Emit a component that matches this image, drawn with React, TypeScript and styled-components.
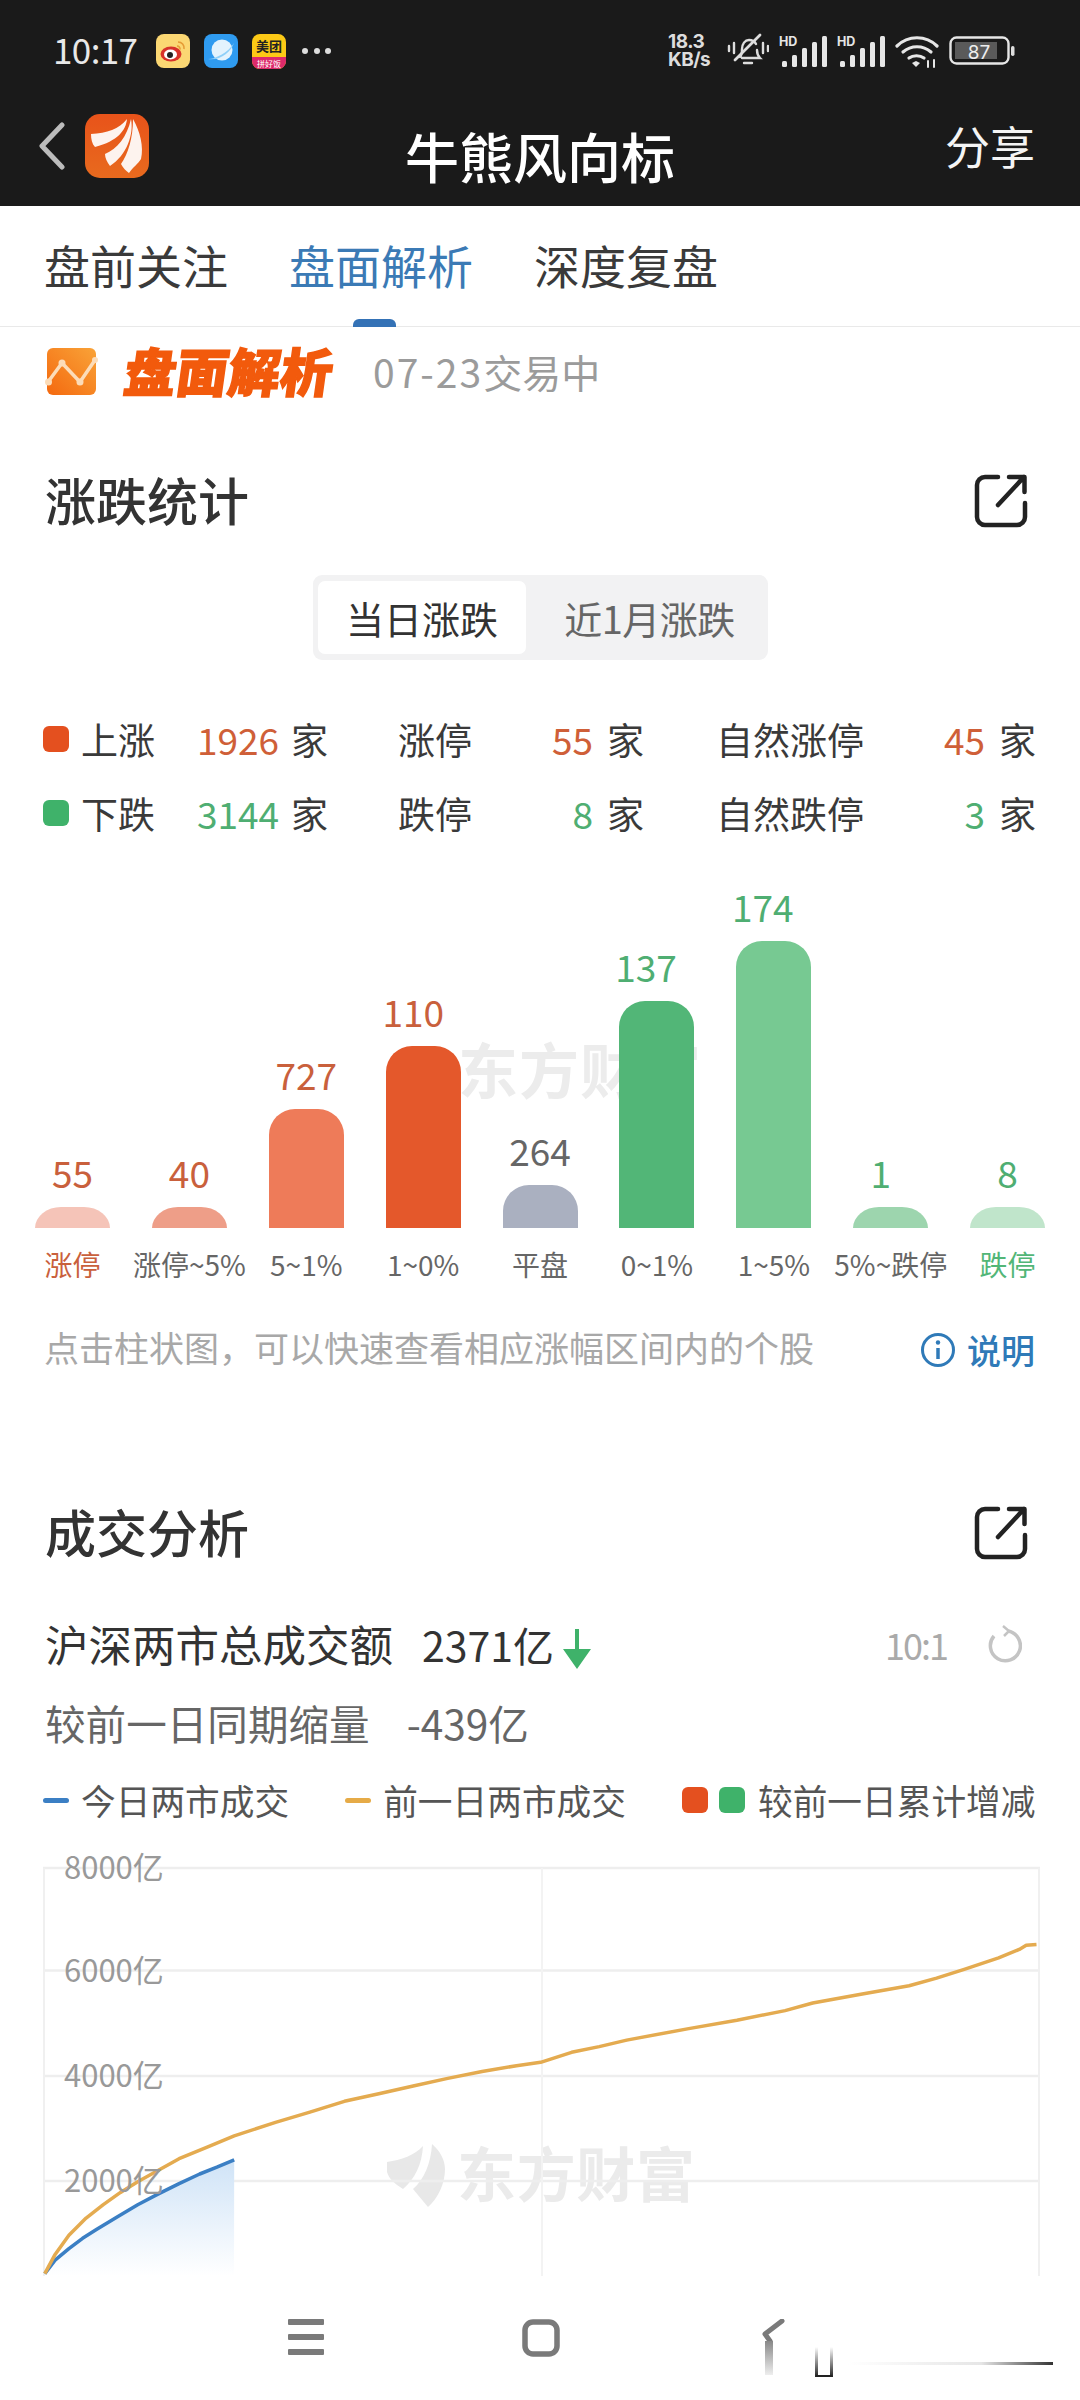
import React from 'react';
import styled, { createGlobalStyle } from 'styled-components';

const GlobalStyle = createGlobalStyle`
  html, body {
    margin: 0;
    padding: 0;
    background: #fff;
  }
  body {
    font-family: "Noto Sans CJK SC", "Noto Sans", sans-serif;
    color: #333;
  }
`;

// Styled components
const Page = styled.div`
  width: 1080px;
  height: 2400px;
  overflow: hidden;
  position: relative;
  background: #fff;
`;

const TopBar = styled.div`
  height: 206px;
  background: #1a1a1a;
  color: #fff;
  display: flex;
  flex-direction: column;
  box-sizing: border-box;
  padding-top: 33px;
`;

const StatusRow = styled.div`
  height: 36px;
  display: flex;
  align-items: center;
  justify-content: space-between;
  padding: 0 65px 0 53px;
`;

const StatusLeft = styled.div`
  display: flex;
  align-items: center;
  gap: 14px;
`;

const Clock = styled.span`
  font-family: "Noto Sans CJK SC", sans-serif;
  font-size: 35px;
  line-height: 36px;
  color: #e8e8e8;
  margin: 0 5px 5px 0;
  letter-spacing: -0.6px;
`;

const StatusRight = styled.div`
  display: flex;
  align-items: center;
  gap: 10px;
`;

const Speed = styled.div`
  font-family: Inter, sans-serif;
  font-weight: 700;
  font-size: 19px;
  line-height: 18px;
  color: #ddd;
  text-align: left;
  width: 49px;
  white-space: nowrap;
  letter-spacing: -0.5px;
`;

const NavRow = styled.div`
  flex: 1;
  display: flex;
  align-items: flex-start;
  padding: 44px 45px 0 39px;
`;

const BackGroup = styled.div`
  width: 366px;
  height: 66px;
  display: flex;
  align-items: center;
  gap: 20px;
`;

const NavTitle = styled.div`
  width: 272px;
  margin-top: 11px;
  font-size: 54px;
  line-height: 64px;
  font-weight: 500;
  color: #fff;
  white-space: nowrap;
`;

const ShareLink = styled.div`
  margin-left: auto;
  margin-top: 5px;
  font-size: 45px;
  line-height: 56px;
  color: #f4f4f4;
`;

const TabBar = styled.div`
  height: 121px;
  box-sizing: border-box;
  display: flex;
  gap: 61px;
  padding: 24px 0 0 44px;
  border-bottom: 1px solid #e9e9e9;
`;

const Tab = styled.div<{ $active?: boolean }>`
  position: relative;
  height: 68px;
  font-size: 46px;
  line-height: 68px;
  color: ${p => (p.$active ? '#3b7ab5' : '#3a3a3a')};

  ${p =>
    p.$active &&
    `&::after {
      content: '';
      position: absolute;
      left: 64px;
      top: 89px;
      width: 43px;
      height: 8px;
      background: #3472b6;
      border-radius: 6px 6px 0 0;
    }`}
`;

const Banner = styled.div`
  height: 68px;
  display: flex;
  align-items: center;
  padding-left: 45px;
  margin-top: 10px;
`;

const BannerTitle = styled.div`
  margin: 0 0 3px 27px;
  font-size: 52px;
  line-height: 60px;
  font-weight: 900;
  color: #f25a0c;
  white-space: nowrap;
  -webkit-text-stroke: 1.5px #f25a0c;
  transform: skewX(-8deg);
`;

const BannerDate = styled.div`
  margin-left: 40px;
  font-size: 39px;
  line-height: 60px;
  color: #9b9b9b;
  white-space: nowrap;
`;

const DateDigits = styled.span`
  letter-spacing: 2px;
`;

const SectionHead = styled.div<{ $top: number }>`
  margin-top: ${p => p.$top}px;
  height: 60px;
  display: flex;
  align-items: center;
  justify-content: space-between;
  padding: 0 52px 0 45px;
`;

const SectionTitle = styled.h3`
  margin: 0;
  font-size: 51px;
  line-height: 60px;
  font-weight: 500;
  color: #333;
`;

const ExportSvg = styled.svg`
  margin-top: 3px;
`;

const SegmentWrap = styled.div`
  display: flex;
  justify-content: center;
  margin: 46px 0 0 1px;
`;

const Segment = styled.div`
  width: 455px;
  height: 85px;
  box-sizing: border-box;
  padding: 6px 5px;
  background: #f2f2f3;
  border-radius: 9px;
  display: flex;
`;

const SegmentItem = styled.div<{ $active?: boolean }>`
  box-sizing: border-box;
  width: ${p => (p.$active ? '208px' : '237px')};
  padding-left: ${p => (p.$active ? 0 : 10)}px;
  border-radius: 7px;
  background: ${p => (p.$active ? '#fff' : 'transparent')};
  color: ${p => (p.$active ? '#333' : '#666')};
  font-size: 38px;
  line-height: 73px;
  text-align: center;
  white-space: nowrap;
  letter-spacing: ${p => (p.$active ? 0 : -0.5)}px;
`;

const StatsTable = styled.div`
  margin-top: 49px;
  padding-left: 43px;
  display: flex;
  flex-direction: column;
  gap: 14px;
`;

const StatsRow = styled.div`
  height: 60px;
  display: grid;
  grid-template-columns: 38px 116px 80px 121px 142px 53px 123px 214px 55px 1fr;
  align-items: center;
  font-size: 37px;
  line-height: 60px;
  color: #3a3a3a;
  white-space: nowrap;
`;

const Dot = styled.span<{ $color: string }>`
  width: 26px;
  height: 26px;
  border-radius: 6px;
  background: ${p => p.$color};
`;

const Count = styled.span<{ $color: string }>`
  color: ${p => p.$color};
  text-align: right;
`;

const Unit = styled.span`
  padding-left: 14px;
`;

const BarChart = styled.div`
  position: relative;
  margin-top: 13px;
  padding: 0 35px;
  height: 372px;
  display: grid;
  grid-template-columns: repeat(9, 75px);
  column-gap: 41.9px;
  align-items: end;
`;

const BarWatermark = styled.div`
  position: absolute;
  left: 458px;
  top: 177px;
  font-size: 60px;
  line-height: 70px;
  font-weight: 700;
  letter-spacing: 1px;
  color: #ececec;
  white-space: nowrap;
`;

const BarColumn = styled.div`
  position: relative;
  display: flex;
  flex-direction: column;
  align-items: center;
`;

const BarValue = styled.div<{ $color: string; $nudge?: number }>`
  font-size: 37px;
  line-height: 44px;
  margin-bottom: 13px;
  margin-right: ${p => (p.$nudge ? p.$nudge * 2 : 0)}px;
  color: ${p => p.$color};
`;

const Bar = styled.div<{ $color: string; $height: number }>`
  width: 75px;
  height: ${p => p.$height}px;
  background: ${p => p.$color};
  border-radius: ${p => (p.$height < 30 ? '26px 26px 0 0 / 21px 21px 0 0' : '26px 26px 0 0')};
`;

const AxisRow = styled.div`
  margin-top: 14px;
  padding: 0 35px;
  display: grid;
  grid-template-columns: repeat(9, 75px);
  column-gap: 41.9px;
`;

const AxisLabel = styled.div<{ $color?: string }>`
  justify-self: center;
  font-size: 28px;
  line-height: 44px;
  color: ${p => p.$color || '#666'};
  white-space: nowrap;
`;

const HintRow = styled.div`
  margin-top: 36px;
  height: 50px;
  display: flex;
  align-items: center;
  justify-content: space-between;
  padding: 0 45px 0 44px;
`;

const Hint = styled.div`
  font-size: 35px;
  line-height: 50px;
  color: #a8a8a8;
  white-space: nowrap;
`;

const InfoLink = styled.div`
  display: flex;
  align-items: center;
  gap: 11px;
  font-size: 34px;
  line-height: 50px;
  font-weight: 500;
  color: #2f7ab8;
  margin-top: 6px;
`;

const TotalRow = styled.div`
  margin-top: 53px;
  height: 60px;
  display: flex;
  align-items: center;
  padding: 0 58px 0 45px;
  font-size: 43.5px;
  line-height: 60px;
  color: #333;
  white-space: nowrap;
`;

const TotalValue = styled.span`
  margin-left: 29px;
  font-size: 41px;
`;

const ArrowSvg = styled.svg`
  margin: 10px 0 0 8px;
`;

const TotalTime = styled.span`
  margin-left: auto;
  font-size: 36px;
  letter-spacing: -2px;
  color: #aaa;
`;

const SpinnerSvg = styled.svg`
  margin-left: 39px;
`;

const CompareRow = styled.div`
  margin-top: 19px;
  height: 60px;
  display: flex;
  align-items: center;
  padding-left: 45px;
  font-size: 40.6px;
  line-height: 60px;
  color: #666;
  white-space: nowrap;
`;

const CompareValue = styled.span`
  margin-left: 37px;
`;

const Legend = styled.div`
  margin-top: 22px;
  height: 50px;
  display: flex;
  align-items: center;
  padding: 0 45px 0 43px;
  font-size: 34.7px;
  line-height: 50px;
  color: #555;
  white-space: nowrap;
`;

const LegendItem = styled.div<{ $gap?: number }>`
  display: flex;
  align-items: center;
  margin-left: ${p => p.$gap || 0}px;
`;

const LegendDash = styled.span<{ $color: string }>`
  width: 26px;
  height: 5px;
  border-radius: 3px;
  background: ${p => p.$color};
  margin-right: 12px;
`;

const LegendSquare = styled.span<{ $color: string; $space: number }>`
  width: 26px;
  height: 26px;
  border-radius: 6px;
  background: ${p => p.$color};
  margin-right: ${p => p.$space}px;
`;

const ChartBox = styled.div`
  margin: 43px 0 0 43px;
  width: 997px;
`;

const ChartSvg = styled.svg`
  display: block;
  overflow: visible;
`;

const BottomNav = styled.div`
  position: absolute;
  left: 0;
  right: 0;
  bottom: 0;
  height: 124px;
  box-sizing: border-box;
  background: #fff;
  display: flex;
  align-items: flex-start;
  padding: 43px 0 0 288px;
`;

const NavSlot = styled.div<{ $width: number }>`
  width: ${p => p.$width}px;
`;

// Data
const bars = [
  { value: '55', height: 21, color: '#f5c4b8', text: '#c9603c', label: '涨停', labelColor: '#c9603c' },
  { value: '40', height: 21, color: '#ee9e88', text: '#c9603c', label: '涨停~5%' },
  { value: '727', height: 119, color: '#ee7b59', text: '#c9603c', label: '5~1%' },
  { value: '110', height: 182, color: '#e4582b', text: '#c9603c', nudge: 10, label: '1~0%' },
  { value: '264', height: 43, color: '#aab0c0', text: '#666', label: '平盘' },
  { value: '137', height: 227, color: '#52b677', text: '#4fae72', nudge: 11, label: '0~1%' },
  { value: '174', height: 287, color: '#77c992', text: '#4fae72', nudge: 11, label: '1~5%' },
  { value: '1', height: 21, color: '#9dd5ae', text: '#4fae72', nudge: 10, label: '5%~跌停' },
  { value: '8', height: 21, color: '#c0e5cb', text: '#4fae72', label: '跌停', labelColor: '#52b677' },
];

const statRows = [
  { dot: '#e4501f', num: '#cf5f38', name: '上涨', total: '1926', limit: '涨停', limitCount: '55', natural: '自然涨停', naturalCount: '45' },
  { dot: '#3fb26a', num: '#4fae72', name: '下跌', total: '3144', limit: '跌停', limitCount: '8', natural: '自然跌停', naturalCount: '3' },
];

const toPoints = (pts: number[][]) =>
  pts.map(([x, y]) => `${(x / 1.452 - 43).toFixed(1)},${(y / 2.613 - 69).toFixed(1)}`).join(' ');

const prevCurve = [
  [65, 1240], [80, 1190], [100, 1140], [125, 1095], [150, 1060], [175, 1028], [200, 1000], [260, 940], [300, 910],
  [340, 880], [400, 845], [450, 818], [500, 790], [550, 770], [600, 750], [650, 730], [700, 712], [750, 697],
  [785, 688], [830, 662], [870, 647], [910, 630], [1000, 600], [1070, 578], [1140, 553], [1180, 533], [1250, 510],
  [1320, 488], [1360, 468], [1400, 445], [1450, 415], [1480, 393], [1490, 382], [1505, 380],
];

const todayCurve = [
  [65, 1240], [80, 1205], [100, 1175], [120, 1148], [140, 1125], [170, 1092], [200, 1060], [230, 1032], [260, 1005],
  [290, 980], [315, 962], [340, 943],
];

const gridLines = [
  { y: 0, label: '8000亿' },
  { y: 102.5, label: '6000亿' },
  { y: 208, label: '4000亿' },
  { y: 313, label: '2000亿' },
];

const ExportIcon = () => (
  <ExportSvg width="54" height="56" viewBox="0 0 54 56" fill="none" stroke="#222" strokeWidth="4.5" strokeLinecap="round" strokeLinejoin="round">
    <path d="M24 4H11a8 8 0 0 0-8 8v32a8 8 0 0 0 8 8h32a8 8 0 0 0 8-8V30" />
    <path d="M24 32 50 4M35 4h15.500v15" />
  </ExportSvg>
);

const WeiboIcon = () => (
  <svg width="34" height="34" viewBox="0 0 34 34">
    <rect width="34" height="34" rx="8" fill="#fbd773" />
    <ellipse cx="15" cy="20" rx="10.500" ry="7.500" fill="#d7322a" />
    <ellipse cx="14.500" cy="20.500" rx="6.500" ry="5" fill="#fff" />
    <circle cx="14" cy="21" r="3" fill="#222" />
    <path d="M22 8a6 6 0 0 1 6 7M21 12a3 3 0 0 1 3 3.500" fill="none" stroke="#e59a35" strokeWidth="1.600" />
  </svg>
);

const BrowserIcon = () => (
  <svg width="34" height="34" viewBox="0 0 34 34">
    <rect width="34" height="34" rx="8" fill="#2f9bf0" />
    <circle cx="18" cy="16" r="10.500" fill="#e3f3fd" />
    <path d="M4 25c7 0 20-6 26-16-3 9-14 18-26 16z" fill="#8fd0f8" />
  </svg>
);

const MeituanIcon = () => (
  <svg width="34" height="35" viewBox="0 0 34 35">
    <rect width="34" height="35" rx="8" fill="#fcc916" />
    <path d="M0 23h34v4a8 8 0 0 1-8 8H8a8 8 0 0 1-8-8z" fill="#dd2a6b" />
    <text x="17" y="17" textAnchor="middle" fontSize="13" fontWeight="700" fill="#222">美团</text>
    <text x="17" y="32.500" textAnchor="middle" fontSize="8" fill="#fff">拼好饭</text>
  </svg>
);

const MoreDots = () => (
  <svg width="34" height="10" viewBox="0 0 34 10" fill="#ddd">
    <circle cx="5" cy="5" r="3" />
    <circle cx="17" cy="5" r="3" />
    <circle cx="28" cy="5" r="3" />
  </svg>
);

const MutedBell = () => (
  <svg width="42" height="36" viewBox="0 0 42 36" fill="none" stroke="#ddd" strokeWidth="2.400" strokeLinecap="round">
    <path d="M13 24c2-2 2-5 2-8 0-5 3-9 7-9s6 2 7 4M30 17c0 3 1 6 3 8H15M17 30h8" />
    <path d="M8 27 33 2" strokeWidth="2.800" />
    <path d="M2 13v5M7 10v10M36 10v10M41 13v5" />
  </svg>
);

const SignalIcon = () => (
  <svg width="48" height="32" viewBox="0 0 48 32" fill="#e6e6e6">
    <text x="0" y="11" fontFamily="Inter, sans-serif" fontSize="12.500" fontWeight="700">HD</text>
    <rect x="3" y="26" width="5" height="6" rx="1.500" />
    <rect x="13" y="20" width="5" height="12" rx="1.500" />
    <rect x="23" y="13" width="5" height="19" rx="1.500" />
    <rect x="33" y="7" width="5" height="25" rx="1.500" />
    <rect x="43" y="1" width="5" height="31" rx="1.500" />
  </svg>
);

const WifiIcon = () => (
  <svg width="44" height="34" viewBox="0 0 44 34" fill="none" stroke="#e6e6e6" strokeWidth="3.200" strokeLinecap="round">
    <path d="M2 12C13 1 31 1 42 12" />
    <path d="M8 18c8-7 20-7 28 0" />
    <path d="M14 24c4-3 11-3 15 0" />
    <path d="M17 29l4 4 4-4-4-2z" fill="#e6e6e6" stroke="none" />
    <path d="M33 27v6M39 26v7" strokeWidth="2" />
  </svg>
);

const BatteryIcon = () => (
  <svg width="66" height="30" viewBox="0 0 66 30">
    <rect x="1.500" y="1.500" width="58" height="26" rx="6" fill="none" stroke="#e6e6e6" strokeWidth="2.400" />
    <rect x="6" y="6" width="42" height="17" fill="#5a5a5a" />
    <rect x="62" y="10" width="3.500" height="10" rx="1.700" fill="#ddd" />
    <text x="30" y="22.500" textAnchor="middle" fontFamily="Inter, sans-serif" fontSize="19" fill="#eee">87</text>
  </svg>
);

const AppLogo = () => (
  <svg width="64" height="64" viewBox="0 0 64 64">
    <defs>
      <linearGradient id="logoBg" x1="0" y1="0" x2="0" y2="1">
        <stop offset="0" stopColor="#e8531a" />
        <stop offset="1" stopColor="#e86a1e" />
      </linearGradient>
    </defs>
    <rect width="64" height="64" rx="15" fill="url(#logoBg)" />
    <path d="M6 20C22 19 34 15 42 5c-1 11-9 22-32 28-3-3-4-8-4-13z" fill="#fdf3ee" />
    <path d="M20 40c12-5 22-17 26-35 3 15-4 36-21 47-3-4-5-8-5-12z" fill="#fdf3ee" />
    <path d="M36 50c7-10 12-26 12-45 7 12 11 28 8 40-3 5-8 8-12 14-3-2-6-5-8-9z" fill="#fdf3ee" />
  </svg>
);

const BannerIcon = () => (
  <svg width="53" height="47" viewBox="0 0 53 47">
    <defs>
      <linearGradient id="bannerBg" x1="1" y1="0" x2="0" y2="1">
        <stop offset="0" stopColor="#f9a338" />
        <stop offset="1" stopColor="#f4690f" />
      </linearGradient>
    </defs>
    <rect x="2" width="49" height="47" rx="6" fill="url(#bannerBg)" />
    <path d="M3 34 17 15l18 19L50 12" fill="none" stroke="#fcdcb8" strokeWidth="3.500" strokeLinejoin="round" />
    <circle cx="3.500" cy="34" r="3.500" fill="#fcdcb8" />
    <circle cx="17" cy="15" r="3.500" fill="#fcdcb8" />
    <circle cx="35" cy="34" r="3.500" fill="#fcdcb8" />
    <circle cx="50" cy="12" r="3" fill="#fcdcb8" />
  </svg>
);

const InfoIcon = () => (
  <svg width="36" height="36" viewBox="0 0 36 36" fill="none" stroke="#2f7ab8" strokeWidth="3">
    <circle cx="18" cy="18" r="15.500" />
    <path d="M18 16v11" strokeWidth="3.500" />
    <circle cx="18" cy="10.500" r="2.200" fill="#2f7ab8" stroke="none" />
  </svg>
);

const App: React.FC = () => {
  return (
    <Page>
      <GlobalStyle />
      <TopBar>
        <StatusRow>
          <StatusLeft>
            <Clock>10:17</Clock>
            <WeiboIcon />
            <BrowserIcon />
            <MeituanIcon />
            <MoreDots />
          </StatusLeft>
          <StatusRight>
            <Speed>18.3<br />KB/s</Speed>
            <MutedBell />
            <SignalIcon />
            <SignalIcon />
            <WifiIcon />
            <BatteryIcon />
          </StatusRight>
        </StatusRow>
        <NavRow>
          <BackGroup>
            <svg width="26" height="48" viewBox="0 0 26 48" fill="none" stroke="#bcbcbc" strokeWidth="5" strokeLinecap="round" strokeLinejoin="round">
              <path d="M23 3 3 24l20 21" />
            </svg>
            <AppLogo />
          </BackGroup>
          <NavTitle>牛熊风向标</NavTitle>
          <ShareLink>分享</ShareLink>
        </NavRow>
      </TopBar>

      <TabBar>
        <Tab>盘前关注</Tab>
        <Tab $active>盘面解析</Tab>
        <Tab>深度复盘</Tab>
      </TabBar>

      <Banner>
        <BannerIcon />
        <BannerTitle>盘面解析</BannerTitle>
        <BannerDate><DateDigits>07-23</DateDigits>交易中</BannerDate>
      </Banner>

      <SectionHead $top={64}>
        <SectionTitle>涨跌统计</SectionTitle>
        <ExportIcon />
      </SectionHead>

      <SegmentWrap>
        <Segment>
          <SegmentItem $active>当日涨跌</SegmentItem>
          <SegmentItem>近1月涨跌</SegmentItem>
        </Segment>
      </SegmentWrap>

      <StatsTable>
        {statRows.map(row => (
          <StatsRow key={row.name}>
            <Dot $color={row.dot} />
            <span>{row.name}</span>
            <Count $color={row.num}>{row.total}</Count>
            <Unit>家</Unit>
            <span>{row.limit}</span>
            <Count $color={row.num}>{row.limitCount}</Count>
            <Unit>家</Unit>
            <span>{row.natural}</span>
            <Count $color={row.num}>{row.naturalCount}</Count>
            <Unit>家</Unit>
          </StatsRow>
        ))}
      </StatsTable>

      <BarChart>
        <BarWatermark>东方财富</BarWatermark>
        {bars.map(bar => (
          <BarColumn key={bar.label}>
            <BarValue $color={bar.text} $nudge={bar.nudge}>{bar.value}</BarValue>
            <Bar $color={bar.color} $height={bar.height} />
          </BarColumn>
        ))}
      </BarChart>

      <AxisRow>
        {bars.map(bar => (
          <AxisLabel key={bar.label} $color={bar.labelColor}>{bar.label}</AxisLabel>
        ))}
      </AxisRow>

      <HintRow>
        <Hint>点击柱状图，可以快速查看相应涨幅区间内的个股</Hint>
        <InfoLink>
          <InfoIcon />
          说明
        </InfoLink>
      </HintRow>

      <SectionHead $top={129}>
        <SectionTitle>成交分析</SectionTitle>
        <ExportIcon />
      </SectionHead>

      <TotalRow>
        沪深两市总成交额
        <TotalValue>2371亿</TotalValue>
        <ArrowSvg width="30" height="40" viewBox="0 0 30 40">
          <path d="M13 0h4v20h12L15 40 1 20h12z" fill="#3fb26a" />
        </ArrowSvg>
        <TotalTime>10:1</TotalTime>
        <SpinnerSvg width="36" height="38" viewBox="0 0 36 38" fill="none" stroke="#c4c4c4" strokeWidth="3.500">
          <path d="M22 6a15 15 0 1 1-14 5" />
          <path d="M17 1l6 5-5 5" strokeWidth="2.500" />
        </SpinnerSvg>
      </TotalRow>

      <CompareRow>
        较前一日同期缩量
        <CompareValue>-439亿</CompareValue>
      </CompareRow>

      <Legend>
        <LegendItem>
          <LegendDash $color="#3b7fc4" />
          今日两市成交
        </LegendItem>
        <LegendItem $gap={56}>
          <LegendDash $color="#e6ab47" />
          前一日两市成交
        </LegendItem>
        <LegendItem $gap={56}>
          <LegendSquare $color="#e4501f" $space={11} />
          <LegendSquare $color="#3fb26a" $space={13} />
          较前一日累计增减
        </LegendItem>
      </Legend>

      <ChartBox>
        <ChartSvg width="997" height="408" viewBox="0 0 997 408">
          <defs>
            <linearGradient id="todayFill" x1="0" y1="0" x2="0" y2="1">
              <stop offset="0" stopColor="#cfe3f7" />
              <stop offset="1" stopColor="#ffffff" />
            </linearGradient>
          </defs>
          {/* watermark */}
          <path d="M344 294C358 292 372 287 380 278 379 296 372 311 360 321 352 316 346 311 344 304z" fill="#e8e8e8" />
          <path d="M389 276C397 283 402 292 402 301 402 316 395 330 385 339 380 333 375 327 370 321 381 312 388 295 389 276z" fill="#e8e8e8" />
          <text x="414" y="329" fontSize="59" fontWeight="700" fill="#ebebeb" textLength="238">东方财富</text>
          {gridLines.map(line => (
            <line key={line.y} x1="0" x2="997" y1={line.y} y2={line.y} stroke="#eeeeee" strokeWidth="2.500" />
          ))}
          <line x1="1" x2="1" y1="0" y2="408" stroke="#f0f0f0" strokeWidth="2" />
          <line x1="499" x2="499" y1="0" y2="408" stroke="#f3f3f3" strokeWidth="2" />
          <line x1="996" x2="996" y1="0" y2="408" stroke="#f0f0f0" strokeWidth="2" />
          <polygon points={`${toPoints(todayCurve)} 191,408 2,408`} fill="url(#todayFill)" />
          <polyline points={toPoints(todayCurve)} fill="none" stroke="#3b7fc4" strokeWidth="3.500" strokeLinejoin="round" />
          <polyline points={toPoints(prevCurve)} fill="none" stroke="#e4ab50" strokeWidth="3.500" strokeLinejoin="round" />
          {gridLines.map(line => (
            <text key={line.label} x="21" y={line.y + 11} fontSize="31" fill="#999">{line.label}</text>
          ))}
        </ChartSvg>
      </ChartBox>

      <BottomNav>
        <NavSlot $width={234}>
          <svg width="36" height="36" viewBox="0 0 36 36" fill="#7a7a7a">
            <rect width="36" height="6" y="0" rx="1" />
            <rect width="36" height="6" y="15" rx="1" />
            <rect width="36" height="6" y="30" rx="1" />
          </svg>
        </NavSlot>
        <NavSlot $width={238}>
          <svg width="38" height="38" viewBox="0 0 38 38" fill="none" stroke="#7a7a7a" strokeWidth="5.500">
            <rect x="3" y="3" width="32" height="32" rx="8" />
          </svg>
        </NavSlot>
        <svg width="310" height="62" viewBox="0 0 310 62" fill="none">
          <defs>
            <linearGradient id="navFade" x1="0" y1="0" x2="0" y2="1">
              <stop offset="0" stopColor="#888" />
              <stop offset="1" stopColor="#eee" />
            </linearGradient>
            <linearGradient id="capFade" x1="0" y1="0" x2="0" y2="1">
              <stop offset="0" stopColor="#fff" />
              <stop offset="1" stopColor="#222" />
            </linearGradient>
            <linearGradient id="lineFade" x1="0" y1="0" x2="1" y2="0">
              <stop offset="0" stopColor="#fff" />
              <stop offset="0.650" stopColor="#e6e6e6" />
              <stop offset="1" stopColor="#333" />
            </linearGradient>
          </defs>
          <path d="M22 2 5 15l5 7" stroke="#7a7a7a" strokeWidth="5" strokeLinecap="round" strokeLinejoin="round" />
          <rect x="5" y="22" width="8" height="34" fill="url(#navFade)" />
          <rect x="55" y="28" width="3" height="30" fill="url(#capFade)" />
          <rect x="70" y="28" width="3" height="30" fill="url(#capFade)" />
          <rect x="56" y="56" width="16" height="2" fill="#222" />
          <rect x="88" y="43" width="205" height="3" fill="url(#lineFade)" />
        </svg>
      </BottomNav>
    </Page>
  );
};

export default App;
